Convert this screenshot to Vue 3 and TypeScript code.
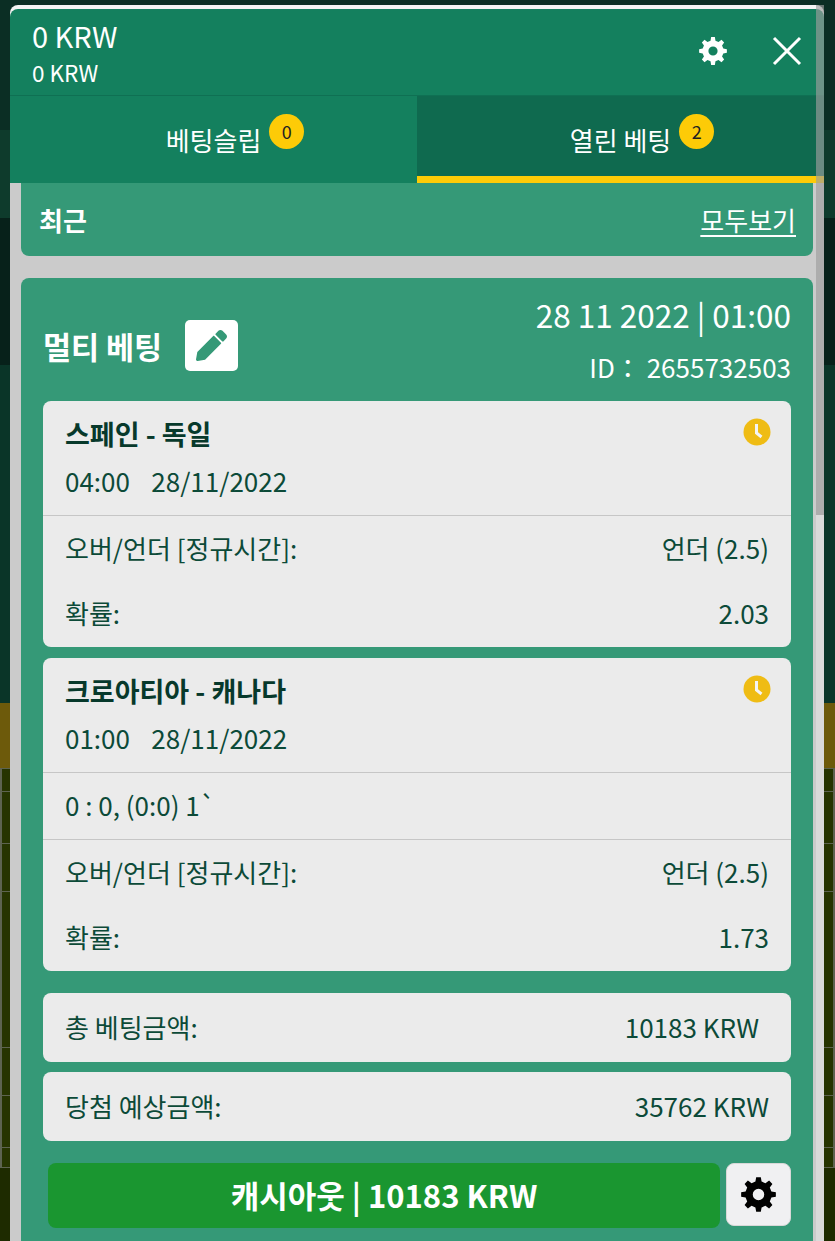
<template>
  <div class="page">
    <div class="backdrop" aria-hidden="true">
      <div class="band band-top" />
      <div class="band band-top2" />
      <div class="band band-dark" />
      <div class="band band-mid" />
      <div class="band band-gold" />
      <div class="band band-pitch">
        <i v-for="y in pitchLines" :key="y" class="pitch-line" :style="{ top: y + 'px' }" />
      </div>
      <div class="band band-turf" />
    </div>

    <div class="panel">
      <header class="head">
        <div class="balances">
          <div class="balance-main">0 KRW</div>
          <div class="balance-sub">0 KRW</div>
        </div>
        <div class="head-actions">
          <svg class="cog" viewBox="0 0 28 28"><path :d="gearPath" fill-rule="evenodd" /></svg>
          <svg class="close" viewBox="0 0 30 30"><path d="M2 2 28 28M28 2 2 28" /></svg>
        </div>
      </header>

      <nav class="tabs">
        <div class="tab">
          <span class="tab-label">베팅슬립<b class="count">0</b></span>
        </div>
        <div class="tab active">
          <span class="tab-label">열린 베팅<b class="count">2</b></span>
        </div>
      </nav>

      <div class="body">
        <section class="recent">
          <strong>최근</strong>
          <a>모두보기</a>
        </section>

        <section class="bet">
          <div class="bet-head">
            <div class="bet-title">
              <strong>멀티 베팅</strong>
              <span class="edit">
                <svg viewBox="0 0 512 512"><path d="M497.9 142.1l-46.1 46.1c-4.7 4.7-12.3 4.7-17 0l-111-111c-4.7-4.7-4.7-12.3 0-17l46.1-46.1c18.7-18.7 49.1-18.7 67.9 0l60.1 60.1c18.8 18.7 18.8 49.1 0 67.9zM284.2 99.8L21.6 362.4.4 483.9c-2.9 16.4 11.4 30.6 27.8 27.8l121.5-21.3 262.6-262.6c4.7-4.7 4.7-12.3 0-17l-111-111c-4.8-4.7-12.4-4.7-17.1 0z" /></svg>
              </span>
            </div>
            <div class="bet-meta">
              <div class="bet-date">28 11 2022 | 01:00</div>
              <div class="bet-id">ID：&nbsp;2655732503</div>
            </div>
          </div>

          <article v-for="t in tickets" :key="t.teams" class="ticket">
            <div class="ticket-top">
              <div class="teams-row">
                <strong>{{ t.teams }}</strong>
                <svg class="clock" viewBox="0 0 28 28">
                  <circle cx="14" cy="14" r="13.5" fill="#efbc14" />
                  <path d="M13.5 6v9l5 4" fill="none" stroke="#f4f4f4" stroke-width="3" />
                </svg>
              </div>
              <div class="kickoff">{{ t.kickoff }}</div>
            </div>
            <div v-if="t.score" class="score">{{ t.score }}</div>
            <div class="lines">
              <div class="line">
                <span>오버/언더 [정규시간]:</span>
                <span>언더 (2.5)</span>
              </div>
              <div class="line">
                <span>확률:</span>
                <span>{{ t.odds }}</span>
              </div>
            </div>
          </article>

          <div class="totals">
            <div class="total">
              <span>총 베팅금액:</span>
              <span class="stake">10183 KRW</span>
            </div>
            <div class="total">
              <span>당첨 예상금액:</span>
              <span>35762 KRW</span>
            </div>
          </div>

          <div class="actions">
            <button class="cashout">캐시아웃 | 10183 KRW</button>
            <button class="cash-cog">
              <svg viewBox="0 0 28 28"><path :d="gearPath" fill-rule="evenodd" /></svg>
            </button>
          </div>
        </section>
      </div>

      <div class="scrollbar" aria-hidden="true"><div class="thumb" /></div>
    </div>
  </div>
</template>

<script setup lang="ts">
interface Ticket {
  teams: string
  kickoff: string
  score?: string
  odds: string
}

// eight-tooth cog with a round hole, 28x28 box
function buildGear(teeth: number, outer: number, root: number, hole: number): string {
  const pts: string[] = []
  const step = (Math.PI * 2) / teeth
  for (let i = 0; i < teeth; i++) {
    const a = i * step - Math.PI / 2
    const corners: [number, number][] = [
      [root, a - step * 0.3],
      [outer, a - step * 0.17],
      [outer, a + step * 0.17],
      [root, a + step * 0.3],
    ]
    for (const [r, t] of corners) {
      pts.push(`${(14 + r * Math.cos(t)).toFixed(2)} ${(14 + r * Math.sin(t)).toFixed(2)}`)
    }
  }
  const ring = `M${14 - hole} 14a${hole} ${hole} 0 1 0 ${hole * 2} 0a${hole} ${hole} 0 1 0 ${-hole * 2} 0z`
  return `M${pts.join('L')}z${ring}`
}

const gearPath = buildGear(8, 14, 10.6, 4.6)

// touchline markings seen down the sides of the slip
const pitchLines = [22, 74, 122, 278, 326, 378]

const tickets: Ticket[] = [
  { teams: '스페인 - 독일', kickoff: '04:00   28/11/2022', odds: '2.03' },
  { teams: '크로아티아 - 캐나다', kickoff: '01:00   28/11/2022', score: '0 : 0, (0:0) 1`', odds: '1.73' },
]
</script>

<style>
html,
body {
  margin: 0;
  background: #0a3325;
}
</style>

<style scoped>
.page {
  position: relative;
  height: 1241px;
  overflow: hidden;
  padding: 5px 11px 0 10px;
  box-sizing: border-box;
  font-family: "Noto Sans CJK KR", "Noto Sans", sans-serif;
}

/* blurred page behind the slip */
.backdrop {
  position: absolute;
  inset: 0;
  display: flex;
  flex-direction: column;
}
.band-top { height: 130px; background: #0b2e24; }
.band-top2 { height: 88px; background: #0e3b2c; }
.band-dark { height: 147px; background: #07211a; }
.band-mid { height: 338px; background: #0a3528; }
.band-gold { height: 65px; background: #6d5a0b; }
.band-pitch {
  position: relative;
  height: 400px;
  background: #263400;
  box-sizing: border-box;
  border: 1px solid #5d6350;
  border-width: 1px 2px 1px 2px;
}
.band-turf { flex: 1; background: #1e2b00; }
.pitch-line {
  position: absolute;
  left: 0;
  right: 0;
  height: 1px;
  background: #5d6350;
}

.panel {
  position: relative;
  height: 100%;
  padding-top: 4px;
  box-sizing: border-box;
  display: flex;
  flex-direction: column;
  overflow: hidden;
}

.head {
  flex: none;
  height: 86px;
  padding-left: 22px;
  display: flex;
  align-items: center;
  justify-content: space-between;
  box-sizing: border-box;
  background: #14805e;
  border-radius: 8px 8px 0 0;
  box-shadow: 0 -4px 0 #f4f4f4;
  color: #fff;
}
.balance-main {
  font-size: 29px;
  line-height: 34px;
}
.balance-sub {
  font-size: 22.5px;
  line-height: 30px;
  margin-top: 5px;
}
.head-actions {
  display: flex;
  align-items: center;
  gap: 45px;
  padding-right: 22px;
  margin-top: -2px;
}
.cog {
  width: 28px;
  height: 28px;
  fill: #fff;
}
.close {
  width: 30px;
  height: 30px;
  fill: none;
  stroke: #fff;
  stroke-width: 3;
}

.tabs {
  flex: none;
  display: grid;
  grid-template-columns: 407px 1fr;
  height: 88px;
  border-top: 1px solid #0f7053;
  box-sizing: border-box;
  background: #14805e;
}
.tab {
  display: flex;
  align-items: center;
  justify-content: center;
  color: #fff;
  font-size: 26px;
  padding-bottom: 1px;
  box-sizing: border-box;
}
.tab.active {
  background: #0f6a4f;
  border-bottom: 7px solid #fdcb07;
  padding: 6px 0 0;
}
.tab-label {
  position: relative;
}
.count {
  position: absolute;
  left: calc(100% + 8px);
  top: -7px;
  width: 35px;
  height: 35px;
  border-radius: 50%;
  background: #fdcb07;
  color: #222;
  font-size: 18px;
  font-weight: 400;
  display: flex;
  align-items: center;
  justify-content: center;
}

.body {
  flex: 1;
  padding: 0 11px;
  background: #cbcbcb;
}
.recent {
  height: 73px;
  padding: 0 17px 0 18px;
  display: flex;
  align-items: center;
  justify-content: space-between;
  background: #359977;
  border-radius: 0 0 8px 8px;
  color: #fff;
  font-size: 26px;
}
.recent strong {
  font-weight: 700;
}
.recent a {
  text-decoration: underline;
  text-underline-offset: 4px;
}

.bet {
  margin-top: 22px;
  padding: 0 22px 30px;
  background: #359977;
  border-radius: 8px;
}
.bet-head {
  height: 123px;
  display: flex;
  justify-content: space-between;
  align-items: center;
  color: #fff;
}
.bet-title {
  display: flex;
  align-items: center;
  gap: 23px;
  font-size: 30.5px;
  padding-top: 12px;
}
.edit {
  width: 53px;
  height: 51px;
  border-radius: 5px;
  background: #fff;
  display: flex;
  align-items: center;
  justify-content: center;
}
.edit svg {
  width: 31px;
  height: 31px;
  fill: #359977;
}
.bet-meta {
  text-align: right;
}
.bet-date {
  font-size: 31.5px;
  line-height: 38px;
}
.bet-id {
  font-size: 26px;
  line-height: 34px;
  margin-top: 17px;
}

.ticket,
.total {
  background: #ebebeb;
  border-radius: 8px;
  color: #0c4a38;
  font-size: 26px;
}
.ticket {
  margin-bottom: 11px;
}
.ticket-top {
  height: 115px;
  padding: 14px 22px 0;
  box-sizing: border-box;
  border-bottom: 1px solid #c6c6c6;
}
.teams-row {
  display: flex;
  align-items: center;
  justify-content: space-between;
  height: 36px;
}
.teams-row strong {
  color: #07392b;
  font-size: 27px;
}
.clock {
  width: 28px;
  height: 28px;
  margin: 0 -2px 2px 0;
}
.kickoff {
  margin-top: 12px;
  line-height: 36px;
  white-space: pre;
  word-spacing: 1.3px;
}
.score {
  height: 67px;
  padding: 0 22px 3px;
  display: flex;
  align-items: center;
  box-sizing: border-box;
  border-bottom: 1px solid #c6c6c6;
}
.lines {
  padding: 1px 22px 0;
}
.line {
  height: 65px;
  padding-bottom: 4px;
  box-sizing: border-box;
  display: flex;
  align-items: center;
  justify-content: space-between;
}

.totals {
  margin-top: 22px;
  display: flex;
  flex-direction: column;
  gap: 10px;
}
.total {
  height: 69px;
  padding: 0 22px 3px;
  box-sizing: border-box;
  display: flex;
  align-items: center;
  justify-content: space-between;
}
.stake {
  margin-right: 10px;
}

.actions {
  margin-top: 22px;
  padding-left: 5px;
  display: flex;
  gap: 6px;
}
.cashout {
  flex: 1;
  height: 65px;
  padding: 0 0 2px;
  border: 0;
  border-radius: 8px;
  background: #1a9630;
  color: #fff;
  font: 700 31px "Noto Sans CJK KR", "Noto Sans", sans-serif;
}
.cash-cog {
  width: 65px;
  height: 63px;
  padding: 0;
  border: 1px solid #d8d8d8;
  border-radius: 8px;
  background: #f0f0f2;
  display: flex;
  align-items: center;
  justify-content: center;
}
.cash-cog svg {
  width: 35px;
  height: 35px;
}

.scrollbar {
  position: absolute;
  top: 0;
  right: 0;
  bottom: 0;
  width: 8px;
  background: rgba(255, 255, 255, 0.3);
}
.thumb {
  height: 510px;
  background: rgba(128, 128, 128, 0.5);
}
</style>
